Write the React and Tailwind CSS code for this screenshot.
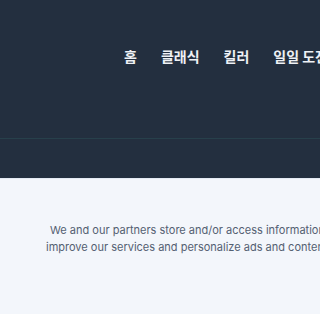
import React from 'react';

const navItems = ['홈', '클래식', '킬러', '일일 도전', '통계'];

export default function App() {
  return (
    <div className="w-[320px] h-[314px] overflow-hidden bg-[#f3f6fb]" style={{ fontFamily: 'Inter, "Noto Sans CJK KR", sans-serif' }}>
      <div className="w-[720px]">
        <header className="bg-[#232f3f]">
          <div className="flex h-[138px] items-start pl-[112px] pt-[44px]">
            <nav className="flex">
              {navItems.map((item) => (
                <a key={item} className="px-3 text-[14px] font-bold leading-[24px] text-[#eef1f5]" style={{ fontFamily: '"Noto Sans CJK KR", sans-serif' }}>
                  {item}
                </a>
              ))}
            </nav>
          </div>
          <div className="h-[40px] border-t border-[#27404b]" />
        </header>
        <section className="border-t border-[#e3eaf3] pt-[43px]">
          <div className="text-[11px] leading-[17px] text-[#536072] whitespace-nowrap">
            <p className="pl-[50px]">We and our partners store and/or access information on a device, such as cookies, to</p>
            <p className="pl-[46px]">improve our services and personalize ads and content, and to measure performance.</p>
          </div>
        </section>
      </div>
    </div>
  );
}
